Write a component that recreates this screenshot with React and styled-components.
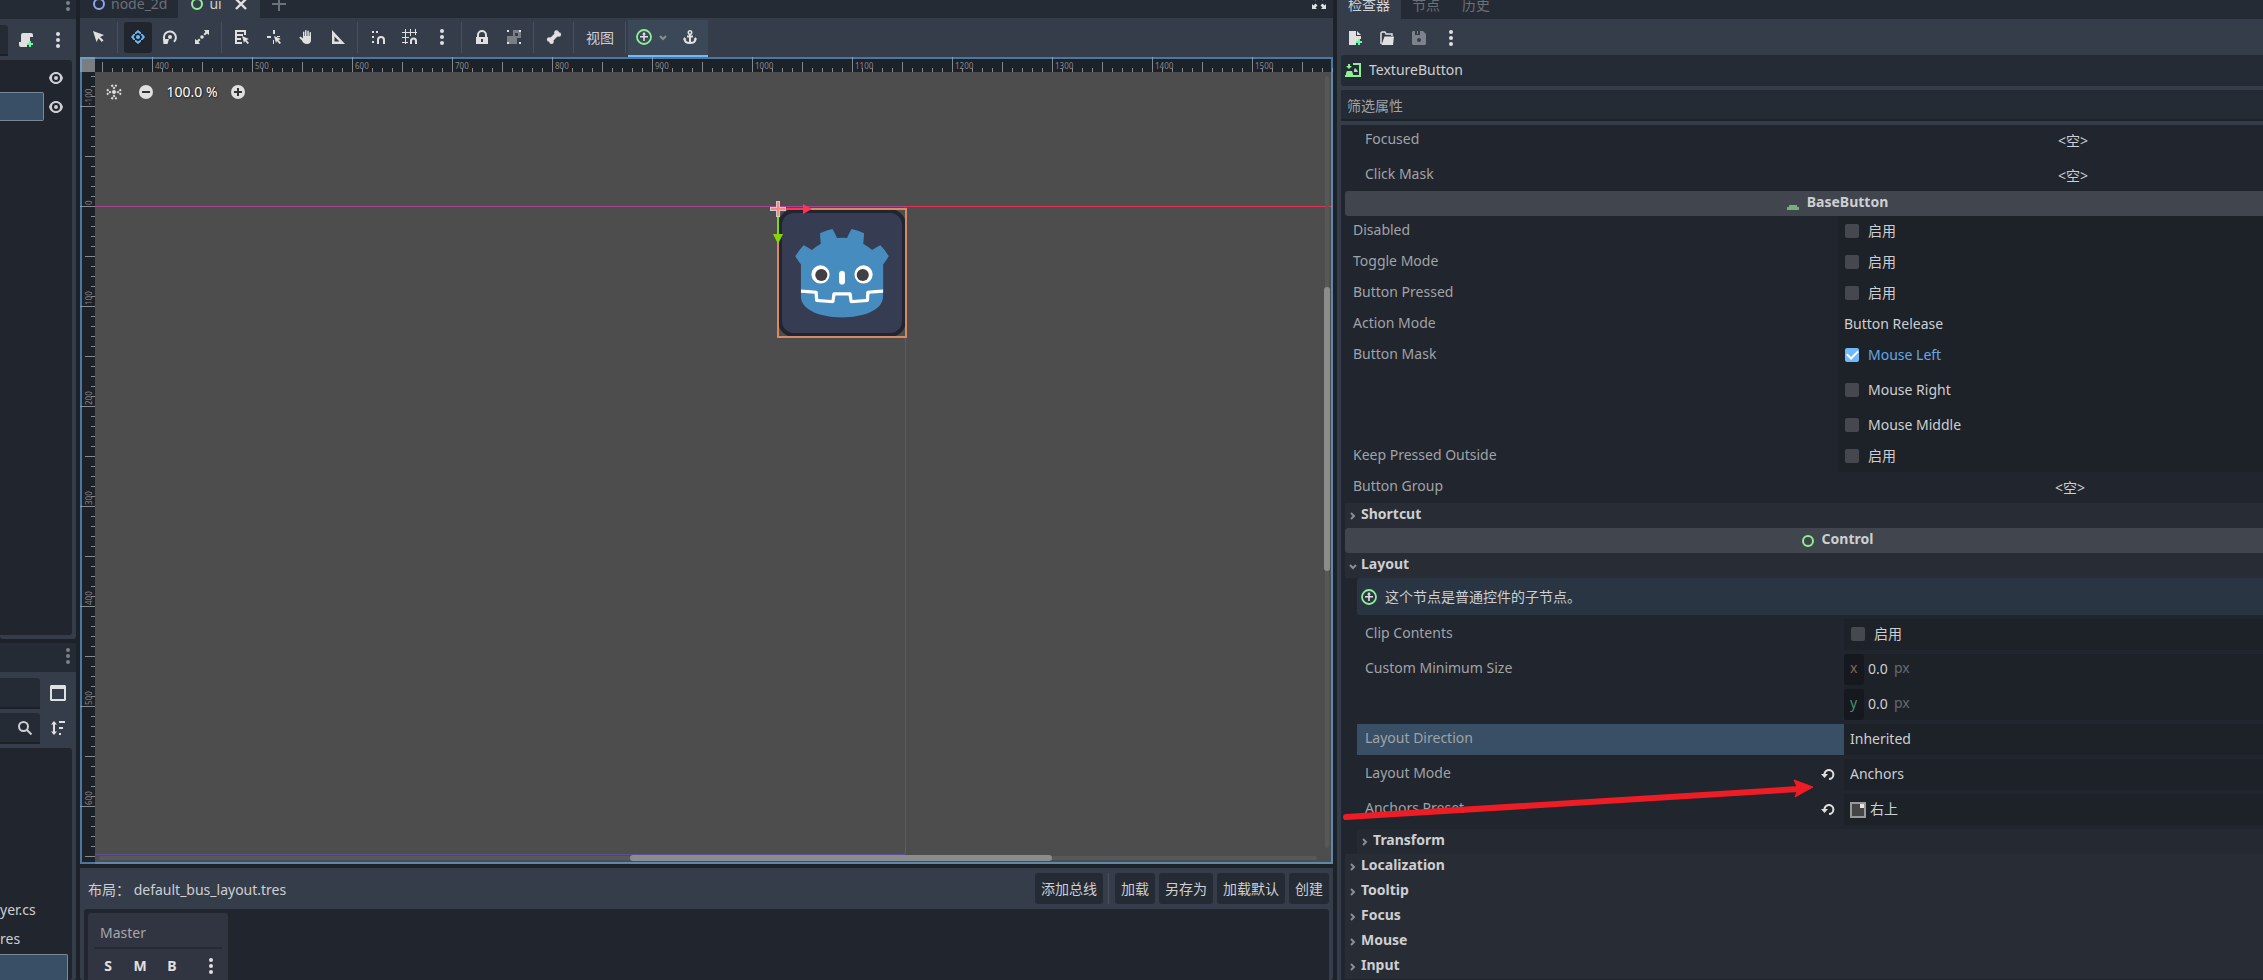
import React, { useState } from "react";
import styled, { createGlobalStyle, css } from "styled-components";

const GlobalStyle = createGlobalStyle`
  * {
    box-sizing: border-box;
  }
  body {
    margin: 0;
    background: #1d2229;
    color: #cdcfd2;
    font-family: "Noto Sans", "Noto Sans CJK SC", sans-serif;
    font-size: 14px;
    line-height: 20px;
    overflow: hidden;
  }
  button, input, select {
    margin: 0;
    padding: 0;
    border: 0;
    background: none;
    color: inherit;
    font: inherit;
    appearance: none;
  }
`;

/* ---------- layout ---------- */

const Editor = styled.div`
  display: grid;
  grid-template-columns: 76px minmax(0, 1fr) 926px;
  gap: 4px;
  height: 100vh;
`;

const Column = styled.div`
  display: flex;
  flex-direction: column;
  gap: 4px;
  min-width: 0;
  min-height: 0;
`;

const Panel = styled.section`
  display: flex;
  flex-direction: column;
  flex: ${(p) => (p.$height ? "none" : "1")};
  height: ${(p) => (p.$height ? p.$height + "px" : "auto")};
  min-height: 0;
  background: #363d4a;
  border-radius: 0 0 3px 3px;
`;

const TabStrip = styled.div`
  display: flex;
  flex: none;
  align-items: flex-end;
  justify-content: ${(p) => (p.$end ? "flex-end" : "flex-start")};
  height: ${(p) => p.$height}px;
  background: #252b34;
  overflow: hidden;
`;

const Tab = styled.button`
  display: flex;
  flex: none;
  align-items: center;
  gap: 4px;
  height: 28px;
  padding: 0 11px;
  color: ${(p) => (p.$active ? "#cdcfd2" : "#6c7078")};
  background: ${(p) => (p.$active ? "#363d4a" : "transparent")};
`;

const Spacer = styled.div`
  flex: 1;
  min-width: 3px;
`;

const Toolbar = styled.div`
  display: flex;
  flex: none;
  align-items: center;
  gap: 4px;
  height: ${(p) => p.$height}px;
  padding: 0 4px;
`;

const Separator = styled.div`
  flex: none;
  width: 4px;
  height: 31px;
  background: linear-gradient(#4a505c, #4a505c) 1px 0 / 1px 100% no-repeat;
`;

const IconButton = styled.button`
  display: flex;
  flex: none;
  align-items: center;
  justify-content: center;
  width: 28px;
  height: 31px;
  padding-bottom: 1px;
  border-radius: 3px;
  color: ${(p) => (p.$active ? "#70bafa" : p.$dim ? "#7d828b" : "#e0e0e0")};
  background: ${(p) => (p.$active ? "#21262e" : "transparent")};
`;

const DockMenu = styled(IconButton)`
  width: 16px;
`;

const TextButton = styled.button`
  height: 31px;
  padding: 1px 6px 0;
  border-radius: 3px;
  white-space: nowrap;
  background: ${(p) => (p.$flat ? "transparent" : "#252b34")};
`;

const ContextTools = styled.div`
  display: flex;
  align-items: center;
  align-self: flex-end;
  gap: 4px;
  height: 37px;
  margin-left: -4px;
  padding: 0 4px;
  background: #3b4857;
  border-bottom: 2px solid #70bafa;
`;

const MenuButton = styled(IconButton)`
  gap: 6px;
  width: 40px;
`;

const Svg = styled.svg`
  flex: none;
  display: block;
  width: ${(p) => p.$w || 16}px;
  height: ${(p) => p.$h || 16}px;
`;

/* ---------- left docks ---------- */

const DockBar = styled.div`
  display: flex;
  flex: none;
  align-items: center;
  gap: 4px;
  padding: ${(p) => p.$pad};
`;

const Field = styled.div`
  display: flex;
  flex: 1;
  align-items: center;
  justify-content: flex-end;
  height: 31px;
  padding-right: 7px;
  background: #252b34;
  border-bottom: 2px solid #1d2229;
  border-radius: 0 3px 0 0;
`;

const Tree = styled.div`
  flex: 1;
  min-height: 0;
  margin: 0 4px ${(p) => (p.$flush ? 0 : 4)}px 0;
  padding-top: 3px;
  background: #21252d;
  border-radius: 0 3px 3px 0;
  overflow: hidden;
`;

const TreeRow = styled.div`
  display: flex;
  align-items: center;
  gap: 4px;
  height: 29px;
  padding-right: 8px;
`;

const TreeCell = styled.div`
  flex: 1;
  height: 29px;
  ${(p) =>
    p.$selected &&
    css`
      background: #384f66;
      border: 1px solid #7b8794;
      border-left: 0;
      border-radius: 0 2px 2px 0;
    `}
`;

const FileList = styled.div`
  display: flex;
  flex-direction: column;
  height: 100%;
  justify-content: flex-end;
`;

const FileName = styled.div`
  height: 29px;
  line-height: 28px;
`;

const FileSelected = styled.div`
  height: 26px;
  margin-right: 4px;
  background: #384f66;
  border: 1px solid #7b8794;
  border-width: 1px 1px 0 0;
  border-radius: 0 2px 0 0;
`;

/* ---------- viewport ---------- */

const Viewport = styled.div`
  position: relative;
  flex: 1;
  min-height: 0;
  background: #4d4d4d;
  overflow: hidden;
`;

const Overlay = styled.svg`
  position: absolute;
  inset: 0;
  width: 100%;
  height: 100%;
  font-size: 8px;
`;

const FocusFrame = styled.div`
  position: absolute;
  inset: 0;
  border: 2px solid rgba(106, 176, 240, 0.6);
`;

const ZoomBar = styled.div`
  position: absolute;
  left: 20px;
  top: 20px;
  display: flex;
  align-items: center;
  gap: 4px;
  color: #fff;
  text-shadow: 0 1px 2px #222, 1px 0 1px #222;
`;

const ZoomLabel = styled.span`
  width: 56px;
  padding-bottom: 2px;
  text-align: center;
`;

const ScrollTrack = styled.div`
  position: absolute;
  background: #585858;
  border-radius: 2px;
  ${(p) =>
    p.$vertical
      ? "right: 4px; top: 19px; bottom: 16px; width: 4px;"
      : "left: 19px; right: 16px; bottom: 4px; height: 4px;"}
`;

const ScrollThumb = styled.div`
  position: absolute;
  background: #8c8c8c;
  border-radius: 3px;
  ${(p) =>
    p.$vertical
      ? "right: 3px; top: 230px; width: 6px; height: 284px;"
      : "left: 550px; bottom: 3px; width: 422px; height: 6px;"}
`;

/* ---------- audio bus panel ---------- */

const BusBody = styled.div`
  flex: 1;
  margin: 0 4px;
  padding: 4px;
  background: #21252d;
  border-radius: 3px 3px 0 0;
  overflow: hidden;
`;

const BusCard = styled.div`
  width: 140px;
  height: 120px;
  padding: 4px 6px;
  background: #303541;
  border-radius: 3px;
`;

const BusName = styled.div`
  height: 32px;
  padding: 6px 6px 0;
  color: #a5a8ad;
  border-bottom: 2px solid #252b34;
`;

const BusButtons = styled.div`
  display: flex;
  gap: 4px;
  margin-top: 2px;
  font-weight: 700;
`;

const BusPath = styled.span`
  padding: 2px 0 0 4px;
`;

/* ---------- inspector ---------- */

const Inspector = styled.aside`
  display: flex;
  flex-direction: column;
  min-height: 0;
  padding-left: 4px;
  background: #363d4a;
  overflow: hidden;
`;

const InspectorTabs = styled(TabStrip)`
  margin-left: -4px;
`;

const ObjectName = styled.button`
  display: flex;
  flex: none;
  align-items: center;
  gap: 8px;
  height: 31px;
  padding-left: 4px;
  padding-bottom: 1px;
  background: #252b34;
  border-radius: 3px 0 0 3px;
`;

const Filter = styled.input`
  flex: none;
  height: 31px;
  margin: 4px 0;
  padding: 2px 0 0 6px;
  background: #252b34;
  border-bottom: 2px solid #1d2229;
  &::placeholder {
    color: #a0a3a8;
    opacity: 1;
  }
`;

// the list is wider than the dock, its right end is clipped
const Properties = styled.div`
  position: relative;
  flex: 1;
  margin-right: -68px;
  padding-left: 4px;
  background: #21252d;
`;

const Category = styled.h2`
  display: flex;
  align-items: center;
  justify-content: center;
  gap: 6px;
  height: 25px;
  margin: 0;
  padding-right: 3px;
  font-size: 14px;
  line-height: 20px;
  font-weight: 700;
  background: #41454e;
  border-radius: 3px 0 0 3px;
`;

const Title = styled.span`
  padding-bottom: 4px;
`;

const Fold = styled.button`
  display: flex;
  align-items: center;
  gap: 3px;
  width: 100%;
  height: 25px;
  padding-left: 3px;
  font-weight: 700;
  text-align: left;
  background: ${(p) => (p.$sub ? "#252931" : "#282c35")};
`;

const Nested = styled.div`
  display: flex;
  flex-direction: column;
  gap: 4px;
  margin-left: 12px;
`;

const Row = styled.div`
  display: grid;
  grid-template-columns: 1fr 1fr;
`;

const RowName = styled.div`
  display: flex;
  align-items: flex-start;
  justify-content: space-between;
  height: 31px;
  padding: 4px 8px 0;
  color: #a0a3a8;
  background: ${(p) => (p.$selected ? "#384f66" : "transparent")};
`;

const Revert = styled.button`
  width: 16px;
  height: 16px;
  padding-top: 3px;
  color: #e0e0e0;
`;

const Value = styled.div`
  display: flex;
  flex-direction: column;
  gap: 4px;
  background: #1d2128;
`;

const Check = styled.label`
  display: flex;
  align-items: center;
  gap: 9px;
  height: 31px;
  padding: 0 0 2px 7px;
  color: ${(p) => (p.$on ? "#63a8e6" : "#cdcfd2")};
`;

const CheckBox = styled.input`
  display: grid;
  place-items: center;
  width: 14px;
  height: 14px;
  border-radius: 2px;
  background: #45484f;
  &:checked {
    background: #70bafa;
  }
  &:checked::after {
    content: "";
    width: 9px;
    height: 5px;
    margin-bottom: 3px;
    border: solid #fff;
    border-width: 0 0 2px 2px;
    transform: rotate(-45deg);
  }
`;

const Select = styled.select`
  flex: 1;
  height: 31px;
  padding: 0 6px 1px;
`;

const PresetBox = styled.div`
  display: flex;
  align-items: center;
  padding-left: 6px;
  & > select {
    padding-left: 4px;
  }
`;

const Resource = styled.button`
  height: 31px;
  padding-right: 29px;
  text-align: center;
  background: #21252d;
`;

const Vector = styled.div`
  display: flex;
  align-items: center;
  height: 31px;
  color: #666a70;
`;

const Axis = styled.label`
  width: 20px;
  height: 31px;
  padding: 4px 6px;
  color: ${(p) => p.$color};
  background: #15181f;
  border-radius: 3px;
`;

const NumberInput = styled.input`
  width: 26px;
  height: 31px;
  padding: 0 0 3px 4px;
  color: #cdcfd2;
`;

const Unit = styled.span`
  padding: 0 0 3px 4px;
`;

const Info = styled.div`
  display: flex;
  align-items: center;
  gap: 8px;
  height: 37px;
  padding-left: 4px;
  background: #293543;
  border-radius: 3px 0 0 3px;
`;

const Pointer = styled.svg`
  position: absolute;
  left: 2px;
  top: 653px;
  width: 472px;
  height: 44px;
  pointer-events: none;
`;

/* ---------- icons ---------- */

const icons = {
  dots: (
    <>
      <circle cx="8" cy="2" r="2" />
      <circle cx="8" cy="8" r="2" />
      <circle cx="8" cy="14" r="2" />
    </>
  ),
  script: (
    <>
      <path d="M5 1a2 2 0 0 0-2 2v7H1v3a2 2 0 0 0 2 2h6v-4h2V9h1V5h3V3a2 2 0 0 0-2-2z" />
      <path d="M11 9h2v2h2v2h-2v2h-2v-2H9v-2h2z" fill="#5fff97" />
    </>
  ),
  eye: (
    <>
      <path
        fillRule="evenodd"
        d="M8 2C4.500 2 2 4.500 1 8c1 3.500 3.500 6 7 6s6-2.500 7-6c-1-3.500-3.500-6-7-6zm0 2a4 4 0 1 1 0 8 4 4 0 0 1 0-8z"
      />
      <circle cx="8" cy="8" r="2" />
    </>
  ),
  select: <path d="M3 2l3.500 11 2-3.800 3.300 3.800 1.700-1.700-3.500-3.300L14 6z" />,
  move: (
    <>
      <circle cx="8" cy="8" r="2" />
      <path d="M8 1L5 3.500V5h1l2-1.500L10 5h1V3.500zM8 15l3-2.500V11h-1l-2 1.500L6 11H5v1.500zM1 8l2.500 3H5v-1L3.500 8 5 6V5H3.500zM15 8l-2.500-3H11v1l1.500 2-1.500 2v1h1.500z" />
    </>
  ),
  rotate: (
    <>
      <path d="M3.500 12.500A6 6 0 1 1 12 12.800" fill="none" stroke="currentColor" strokeWidth="2" />
      <path d="M1 10h6l-1.500 5H1.500z" />
      <circle cx="8" cy="8" r="2" />
    </>
  ),
  scale: (
    <>
      <path d="M10 1h5v5l-2-1.500-2 2L9.500 5l2-2zM6 15H1v-5l2 1.500 2-2L6.500 11l-2 2z" />
      <circle cx="8" cy="8" r="1.800" />
    </>
  ),
  list: (
    <>
      <path d="M1 1h11v2H3v2h6v2H3v2h4v2H3v2h5v2H1zM10 3h2v3h-2z" />
      <path d="M8 7l7 3-2.500 1 2.500 3-1.500 1-2.500-3-1 2z" />
    </>
  ),
  pivot: (
    <>
      <path d="M7 1h2v4H7zM1 7h4v2H1zM7 11h1v4H7zM11 7h3v1h-3z" />
      <path d="M8 7l7 3-2.500 1 2.500 3-1.500 1-2.500-3-1 2z" />
    </>
  ),
  hand: (
    <path d="M7 1.500c0-.8 1.500-.8 1.500 0V7h.8V2c0-.8 1.500-.8 1.500 0v5h.7V3.500c0-.8 1.500-.8 1.500 0V11c0 2.500-1.500 4-4 4-3 0-4-1.500-5-3.500L1.500 9c0-1 1-1.500 2-.8L5 9.500V3c0-.8 1.400-.8 1.400 0v4H7z" />
  ),
  ruler: <path fillRule="evenodd" d="M2 1v14h13zm2.500 6.500L9.500 12.500h-5z" />,
  snap: (
    <>
      <path d="M2 2h2v2H2zM6 2h2v2H6zM2 7h2v2H2zM2 12h2v2H2z" />
      <path d="M8 15v-4a3 3 0 0 1 6 0v4" fill="none" stroke="currentColor" strokeWidth="2" />
    </>
  ),
  grid: (
    <>
      <path d="M0 3.500h15M0 8.500h7M0 13.500h6M3.500 0v15M8.500 0v7M13.500 0v6" fill="none" stroke="currentColor" />
      <path d="M9 15v-3a2.500 2.500 0 0 1 5 0v3" fill="none" stroke="currentColor" strokeWidth="2" />
    </>
  ),
  lock: (
    <path
      fillRule="evenodd"
      d="M8 1a5 5 0 0 0-5 5v2H2v7h12V8h-1V6a5 5 0 0 0-5-5zm0 2a3 3 0 0 1 3 3v2H5V6a3 3 0 0 1 3-3zM7 10h2v3H7z"
    />
  ),
  group: (
    <>
      <path d="M7 1h6v2h2v6h-4v6H3v-2H1V7h6zm2 3v3h3V4z" fillRule="evenodd" opacity=".4" />
      <path d="M1 1h2v2H1zM13 1h2v2h-2zM1 13h2v2H1zM13 13h2v2h-2z" />
    </>
  ),
  bone: (
    <>
      <path d="M4 12l8-8" stroke="currentColor" strokeWidth="4" />
      <circle cx="10.500" cy="3.500" r="2.300" />
      <circle cx="12.800" cy="5.500" r="2.300" />
      <circle cx="3.200" cy="10.500" r="2.300" />
      <circle cx="5.500" cy="12.800" r="2.300" />
    </>
  ),
  container: (
    <>
      <circle cx="8" cy="8" r="7" fill="none" stroke="#8eef97" strokeWidth="1.800" />
      <path d="M8 3L6 5.500h1.200V7H4v1.500h3.200V12h1.600V8.500H12V7H8.800V5.500H10z" fill="#e0e0e0" />
    </>
  ),
  anchor: (
    <>
      <circle cx="8" cy="3.500" r="1.700" fill="none" stroke="currentColor" strokeWidth="1.600" />
      <path d="M8 5v9M5 7.500h6M2.500 9.500c0 3 2.500 4.500 5.500 4.500s5.500-1.500 5.500-4.500" fill="none" stroke="currentColor" strokeWidth="2" />
      <path d="M1 10.500L2.500 8l2 2.500zM15 10.500L13.500 8l-2 2.500z" />
    </>
  ),
  expand: (
    <path d="M1 1h5L4.500 2.500l2 2-2 2-2-2L1 6zM15 1v5l-1.500-1.500-2 2-2-2 2-2L10 1zM1 15v-5l1.500 1.500 2-2 2 2-2 2L6 15zM15 15h-5l1.500-1.500-2-2 2-2 2 2L15 10z" />
  ),
  close: <path d="M3 3l10 10M13 3L3 13" stroke="#e0e0e0" strokeWidth="2.400" />,
  plus: <path d="M8 1v14M1 8h14" stroke="currentColor" strokeWidth="2" />,
  center: (
    <>
      <circle cx="8" cy="8" r="2" />
      <path d="M5.500 1L8 4l2.500-3M5.500 15L8 12l2.500 3M1 5.500L4 8l-3 2.500M15 5.500L12 8l3 2.500" fill="none" stroke="currentColor" strokeWidth="2" strokeDasharray="2 1" />
    </>
  ),
  zoomOut: (
    <>
      <circle cx="8" cy="8" r="7" />
      <path d="M4 8h8" stroke="#333" strokeWidth="2" />
    </>
  ),
  zoomIn: (
    <>
      <circle cx="8" cy="8" r="7" />
      <path d="M4 8h8M8 4v8" stroke="#333" strokeWidth="2" />
    </>
  ),
  panelSplit: (
    <path fillRule="evenodd" d="M1 0h14l1 1v14l-1 1H1l-1-1V1zm1 4v10h12V4z" />
  ),
  search: (
    <>
      <circle cx="6.500" cy="6.500" r="4.500" fill="none" stroke="currentColor" strokeWidth="2" />
      <path d="M9.500 9.500l5 5" stroke="currentColor" strokeWidth="2" />
    </>
  ),
  sort: (
    <path d="M4 1L1 4.500h2v7H1L4 15l3-3.500H5v-7h2zM9 1h6v2H9zM9 7h4v2H9zM9 13h2v2H9z" />
  ),
  newFile: (
    <>
      <path d="M2 1h7v5h5v3h-3v2H9v4H2zM10 1l4 4h-4z" />
      <path d="M11 9h2v2h2v2h-2v2h-2v-2H9v-2h2z" fill="#5fff97" />
    </>
  ),
  folder: (
    <>
      <path d="M2 14V3l1-1h3l1 2h6v2" fill="none" stroke="currentColor" strokeWidth="1.500" />
      <path d="M5.500 6.500H15L14 15H2.500z" />
    </>
  ),
  save: (
    <path fillRule="evenodd" d="M2 1h2v4h5V1h3l3 3v10l-1 1H2l-1-1V2zm6 7a2 2 0 1 0 0 4 2 2 0 0 0 0-4zM6 1h1v3H6z" />
  ),
  textureButton: (
    <g fill="#8eef97">
      <path d="M3 2h2v2h2L4 7 1 4h2zM2 9h5l1 3v1H1v-2zM0 13h8v2H0z" />
      <path d="M8 1h8v14H8v-2h6V3H8z" />
      <path d="M9 10V8l1-2 2 2 1 2z" />
    </g>
  ),
  baseButton: <path d="M4 9h8v2h2v3H2v-3h2z" fill="#78ae7c" />,
  control: <circle cx="8" cy="8" r="5" fill="none" stroke="#8eef97" strokeWidth="2" />,
  node2d: <circle cx="8" cy="8" r="5" fill="none" stroke="#8da5f3" strokeWidth="2" />,
  revert: (
    <>
      <path d="M4.500 9V7.500a4.500 4.500 0 1 1 4.500 5.500" fill="none" stroke="currentColor" strokeWidth="2" />
      <path d="M1 8h7l-3.500 4z" />
    </>
  ),
  preset: (
    <>
      <path d="M0 0h16v16H0z" fill="#999" />
      <path d="M2 2h12v12H2z" fill="#454545" />
      <path d="M10 2h4v4h-4z" fill="#e6e6e6" />
    </>
  ),
};

function Icon({ name }) {
  return (
    <Svg viewBox="0 0 16 16" fill="currentColor" aria-hidden="true">
      {icons[name]}
    </Svg>
  );
}

function Chevron({ down }) {
  return (
    <Svg $w={10} $h={10} viewBox="0 0 10 10" fill="none" stroke="#8b8e94" strokeWidth="2" aria-hidden="true">
      <path d={down ? "M2 4l3 3 3-3" : "M3 2l3 3-3 3"} />
    </Svg>
  );
}

function Tool({ name, label, active, dim }) {
  return (
    <IconButton aria-label={label} $active={active} $dim={dim}>
      <Icon name={name} />
    </IconButton>
  );
}

/* ---------- viewport drawing ---------- */

const range = (from, to) => {
  const out = [];
  for (let i = from; i <= to; i += 10) out.push(i);
  return out;
};

// ruler tick length, counted from the canvas side
const tickLength = (n) => (n % 100 === 0 ? 15 : n % 50 === 0 ? 10 : 4);

const ORIGIN_X = -328;
const ORIGIN_Y = 149;

function Rulers() {
  return (
    <g fill="#85888d">
      <path d="M0 0h3000v15H15v2000H0z" fill="#1d2128" />
      {range(350, 1600).map((n) => (
        <rect key={n} x={n + ORIGIN_X} y={15 - tickLength(n)} width="1" height={tickLength(n)} />
      ))}
      {range(-130, 650).map((n) => (
        <rect key={n} x={15 - tickLength(n)} y={n + ORIGIN_Y} width={tickLength(n)} height="1" />
      ))}
      {range(400, 1500)
        .filter((n) => n % 100 === 0)
        .map((n) => (
          <text key={n} x={n + ORIGIN_X + 3} y="12">
            {n}
          </text>
        ))}
      {range(-100, 600)
        .filter((n) => n % 100 === 0)
        .map((n) => (
          <text key={n} transform={`translate(12 ${n + ORIGIN_Y - 1}) rotate(-90)`}>
            {n}
          </text>
        ))}
      <path d="M0 0h15v15H0z" fill="#7a7d82" />
    </g>
  );
}

function Sprite() {
  return (
    <g transform="translate(698 152)">
      <rect x="2" y="2" width="124" height="124" rx="14" fill="#363d52" stroke="#212532" strokeWidth="4" />
      <g transform="scale(.101) translate(122 122)">
        <g fill="#fff">
          <path d="M105 673v33q407 354 814 0v-33z" />
          <path
            fill="#478cbf"
            d="m105 673 152 14q12 1 15 14l4 67 132 10 8-61q2-11 15-15h162q13 4 15 15l8 61 132-10 4-67q3-13 15-14l152-14V427q30-39 56-81-35-59-83-108-43 20-82 47-40-37-88-64 7-51 8-102-59-28-123-42-26 43-46 89-49-7-98 0-20-46-46-89-64 14-123 42 1 51 8 102-48 27-88 64-39-27-82-47-48 49-83 108 26 42 56 81zm0 33v39c0 276 813 276 813 0v-39l-134 12-5 69q-2 10-14 13l-162 11q-12 0-16-11l-10-65H447l-10 65q-4 11-16 11l-162-11q-12-3-14-13l-5-69z"
          />
          <path d="M483 600c3 34 55 34 58 0v-86c-3-34-55-34-58 0z" />
          <circle cx="725" cy="526" r="90" />
          <circle cx="299" cy="526" r="90" />
        </g>
        <g fill="#414042">
          <circle cx="307" cy="532" r="60" />
          <circle cx="717" cy="532" r="60" />
        </g>
      </g>
      <rect x="0" y="0" width="128" height="128" fill="none" stroke="#d58a63" strokeWidth="2" />
      <path d="M0 0h26" stroke="#ff3352" strokeWidth="2" />
      <path d="M25-5l9 5-9 5z" fill="#ff3352" />
      <path d="M0 0v26" stroke="#86d703" strokeWidth="2" />
      <path d="M-5 25l5 10 5-10z" fill="#86d703" />
      <path d="M-8 0H8M0-8V8" stroke="#d9d9d9" strokeWidth="4" opacity=".9" />
      <path d="M-7 0H7M0-7V7" stroke="#ff8484" strokeWidth="2" />
    </g>
  );
}

function Canvas() {
  return (
    <Viewport>
      <Overlay>
        <path d="M825 149.500H3000" stroke="#dd3355" />
        <path d="M15 149.500H825" stroke="#a4468f" />
        <path d="M15 797.500H825" stroke="#5a5295" />
        <path d="M825.500 150V797" stroke="#5c5a72" />
        <Rulers />
        <Sprite />
      </Overlay>
      <ScrollTrack />
      <ScrollTrack $vertical />
      <ScrollThumb />
      <ScrollThumb $vertical />
      <FocusFrame />
      <ZoomBar>
        <Tool name="center" label="Center view" />
        <Tool name="zoomOut" label="Zoom out" />
        <ZoomLabel>100.0 %</ZoomLabel>
        <Tool name="zoomIn" label="Zoom in" />
      </ZoomBar>
    </Viewport>
  );
}

/* ---------- inspector parts ---------- */

function Property({ name, selected, revert, children }) {
  return (
    <Row>
      <RowName $selected={selected}>
        {name}
        {revert && (
          <Revert aria-label={"Revert " + name}>
            <Icon name="revert" />
          </Revert>
        )}
      </RowName>
      <Value>{children}</Value>
    </Row>
  );
}

function Toggle({ label = "启用", initial = false }) {
  const [on, setOn] = useState(initial);
  return (
    <Check $on={on}>
      <CheckBox type="checkbox" checked={on} onChange={() => setOn(!on)} />
      {label}
    </Check>
  );
}

function Choice({ label, value }) {
  return (
    <Select aria-label={label} defaultValue={value}>
      <option>{value}</option>
    </Select>
  );
}

function AxisField({ axis, color }) {
  return (
    <Vector>
      <Axis htmlFor={"min-" + axis} $color={color}>
        {axis}
      </Axis>
      <NumberInput id={"min-" + axis} defaultValue="0.0" />
      <Unit>px</Unit>
    </Vector>
  );
}

function Section({ name, down, sub }) {
  return (
    <Fold $sub={sub}>
      <Chevron down={down} />
      <Title>{name}</Title>
    </Fold>
  );
}

function LeftColumn() {
  return (
    <Column>
      <Panel>
        <TabStrip $height={19} $end>
          <DockMenu $dim aria-label="Dock menu">
            <Icon name="dots" />
          </DockMenu>
        </TabStrip>
        <DockBar $pad="6px 4px 4px 0">
          <Field />
          <Tool name="script" label="Attach script" />
          <Tool name="dots" label="More" />
        </DockBar>
        <Tree>
          <TreeRow>
            <TreeCell />
            <Icon name="eye" />
          </TreeRow>
          <TreeRow>
            <TreeCell $selected />
            <Icon name="eye" />
          </TreeRow>
        </Tree>
      </Panel>
      <Panel $height={337}>
        <TabStrip $height={29} $end>
          <DockMenu $dim aria-label="Dock menu">
            <Icon name="dots" />
          </DockMenu>
        </TabStrip>
        <DockBar $pad="6px 4px 0 0">
          <Field />
          <Tool name="panelSplit" label="Split mode" />
        </DockBar>
        <DockBar $pad="4px 4px 4px 0">
          <Field>
            <Icon name="search" />
          </Field>
          <Tool name="sort" label="Sort files" />
        </DockBar>
        <Tree $flush>
          <FileList>
            <FileName>yer.cs</FileName>
            <FileName>res</FileName>
            <FileSelected />
          </FileList>
        </Tree>
      </Panel>
    </Column>
  );
}

function CenterColumn() {
  return (
    <Column>
      <Panel>
        <TabStrip $height={18}>
          <Tab>
            <Icon name="node2d" />
            node_2d
          </Tab>
          <Tab $active>
            <Icon name="control" />
            ui
            <Spacer />
            <Icon name="close" />
          </Tab>
          <Tab aria-label="Add scene">
            <Icon name="plus" />
          </Tab>
          <Spacer />
          <Tool name="expand" label="Distraction free" />
        </TabStrip>
        <Toolbar $height={39}>
          <Tool name="select" label="Select" />
          <Separator />
          <Tool name="move" label="Move" active />
          <Tool name="rotate" label="Rotate" />
          <Tool name="scale" label="Scale" />
          <Separator />
          <Tool name="list" label="List select" />
          <Tool name="pivot" label="Pivot" />
          <Tool name="hand" label="Pan" />
          <Tool name="ruler" label="Ruler" />
          <Separator />
          <Tool name="snap" label="Smart snap" />
          <Tool name="grid" label="Grid snap" />
          <Tool name="dots" label="Snap options" />
          <Separator />
          <Tool name="lock" label="Lock" />
          <Tool name="group" label="Group" />
          <Separator />
          <Tool name="bone" label="Skeleton" />
          <Separator />
          <TextButton $flat>视图</TextButton>
          <Separator />
          <ContextTools>
            <MenuButton aria-label="Container sizing">
              <Icon name="container" />
              <Chevron down />
            </MenuButton>
            <Tool name="anchor" label="Anchors" />
          </ContextTools>
        </Toolbar>
        <Canvas />
      </Panel>
      <Panel $height={112}>
        <Toolbar $height={41}>
          <BusPath>布局： default_bus_layout.tres</BusPath>
          <Spacer />
          <TextButton>添加总线</TextButton>
          <Separator />
          <TextButton>加载</TextButton>
          <TextButton>另存为</TextButton>
          <TextButton>加载默认</TextButton>
          <TextButton>创建</TextButton>
        </Toolbar>
        <BusBody>
          <BusCard>
            <BusName>Master</BusName>
            <BusButtons>
              <IconButton>S</IconButton>
              <IconButton>M</IconButton>
              <IconButton>B</IconButton>
              <Spacer />
              <Tool name="dots" label="Bus options" />
            </BusButtons>
          </BusCard>
        </BusBody>
      </Panel>
    </Column>
  );
}

function InspectorDock() {
  return (
    <Inspector>
      <InspectorTabs $height={19}>
        <Tab $active>检查器</Tab>
        <Tab>节点</Tab>
        <Tab>历史</Tab>
      </InspectorTabs>
      <DockBar $pad="4px 0 1px">
        <Tool name="newFile" label="New resource" />
        <Tool name="folder" label="Load resource" />
        <Tool name="save" label="Save resource" dim />
        <Tool name="dots" label="Resource options" />
      </DockBar>
      <ObjectName>
        <Icon name="textureButton" />
        TextureButton
      </ObjectName>
      <Filter aria-label="筛选属性" placeholder="筛选属性" />
      <Properties>
        <Nested>
          <Property name="Focused">
            <Resource>&lt;空&gt;</Resource>
          </Property>
          <Property name="Click Mask">
            <Resource>&lt;空&gt;</Resource>
          </Property>
        </Nested>
        <Category>
          <Icon name="baseButton" />
          <Title>BaseButton</Title>
        </Category>
        <Property name="Disabled">
          <Toggle />
        </Property>
        <Property name="Toggle Mode">
          <Toggle />
        </Property>
        <Property name="Button Pressed">
          <Toggle />
        </Property>
        <Property name="Action Mode">
          <Choice label="Action Mode" value="Button Release" />
        </Property>
        <Property name="Button Mask">
          <Toggle label="Mouse Left" initial />
          <Toggle label="Mouse Right" />
          <Toggle label="Mouse Middle" />
        </Property>
        <Property name="Keep Pressed Outside">
          <Toggle />
        </Property>
        <Property name="Button Group">
          <Resource>&lt;空&gt;</Resource>
        </Property>
        <Section name="Shortcut" />
        <Category>
          <Icon name="control" />
          <Title>Control</Title>
        </Category>
        <Section name="Layout" down />
        <Nested>
          <Info>
            <Icon name="container" />
            这个节点是普通控件的子节点。
          </Info>
          <Property name="Clip Contents">
            <Toggle />
          </Property>
          <Property name="Custom Minimum Size">
            <AxisField axis="x" color="#8a6552" />
            <AxisField axis="y" color="#4f8f66" />
          </Property>
          <Property name="Layout Direction" selected>
            <Choice label="Layout Direction" value="Inherited" />
          </Property>
          <Property name="Layout Mode" revert>
            <Choice label="Layout Mode" value="Anchors" />
          </Property>
          <Property name="Anchors Preset" revert>
            <PresetBox>
              <Icon name="preset" />
              <Choice label="Anchors Preset" value="右上" />
            </PresetBox>
          </Property>
          <Section name="Transform" sub />
        </Nested>
        <Section name="Localization" />
        <Section name="Tooltip" />
        <Section name="Focus" />
        <Section name="Mouse" />
        <Section name="Input" />
        <Pointer viewBox="0 0 472 44" aria-hidden="true">
          <path d="M3 39L456 11" stroke="#ee1c24" strokeWidth="6" strokeLinecap="round" />
          <path d="M470 9L451 2l4 9-3 8z" fill="#ee1c24" stroke="#ee1c24" />
        </Pointer>
      </Properties>
    </Inspector>
  );
}

export default function App() {
  return (
    <>
      <GlobalStyle />
      <Editor>
        <LeftColumn />
        <CenterColumn />
        <InspectorDock />
      </Editor>
    </>
  );
}
